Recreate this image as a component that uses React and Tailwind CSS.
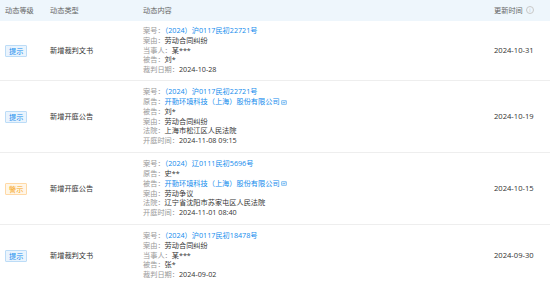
import React from "react";

const ROWS = [
  {
    level: "提示",
    type: "新增裁判文书",
    height: "h-[60px]",
    date: "2024-10-31",
    lines: [
      { label: "案号：", value: "（2024）沪0117民初22721号", link: true },
      { label: "案由：", value: "劳动合同纠纷" },
      { label: "当事人：", value: "某***" },
      { label: "被告：", value: "刘*" },
      { label: "裁判日期：", value: "2024-10-28" },
    ],
  },
  {
    level: "提示",
    type: "新增开庭公告",
    height: "h-[72px]",
    date: "2024-10-19",
    lines: [
      { label: "案号：", value: "（2024）沪0117民初22721号", link: true },
      { label: "原告：", value: "开勤环境科技（上海）股份有限公司", link: true, icon: true },
      { label: "被告：", value: "刘*" },
      { label: "案由：", value: "劳动合同纠纷" },
      { label: "法院：", value: "上海市松江区人民法院" },
      { label: "开庭时间：", value: "2024-11-08 09:15" },
    ],
  },
  {
    level: "警示",
    type: "新增开庭公告",
    height: "h-[72px]",
    date: "2024-10-15",
    lines: [
      { label: "案号：", value: "（2024）辽0111民初5696号", link: true },
      { label: "原告：", value: "史**" },
      { label: "被告：", value: "开勤环境科技（上海）股份有限公司", link: true, icon: true },
      { label: "案由：", value: "劳动争议" },
      { label: "法院：", value: "辽宁省沈阳市苏家屯区人民法院" },
      { label: "开庭时间：", value: "2024-11-01 08:40" },
    ],
  },
  {
    level: "提示",
    type: "新增裁判文书",
    height: "h-[62px]",
    date: "2024-09-30",
    lines: [
      { label: "案号：", value: "（2024）沪0117民初18478号", link: true },
      { label: "案由：", value: "劳动合同纠纷" },
      { label: "当事人：", value: "某***" },
      { label: "被告：", value: "张*" },
      { label: "裁判日期：", value: "2024-09-02" },
    ],
  },
];

function Badge({ level }) {
  const warn = level === "警示";
  return (
    <span
      className={
        warn
          ? "inline-block border border-[#ffd9a6] bg-[#fff6e8] text-[#f5a623] px-[3px] leading-[10px] rounded-[1px]"
          : "inline-block border border-[#bcdcf7] bg-[#eaf4fd] text-[#128bed] px-[3px] leading-[10px] rounded-[1px]"
      }
    >
      {level}
    </span>
  );
}

function LinkIcon() {
  return (
    <svg width="6" height="5" viewBox="0 0 6 5" className="inline-block ml-[1px] align-middle">
      <rect x="0.5" y="0.5" width="5" height="4" rx="0.6" fill="#d8ebfb" stroke="#5aa9ee" strokeWidth="0.6" />
      <path d="M1.5 3.2 L2.6 2 L3.4 2.8 L4.5 1.6" fill="none" stroke="#128bed" strokeWidth="0.5" />
    </svg>
  );
}

export default function App() {
  return (
    <div
      className="w-[550px] h-[286px] overflow-hidden bg-white text-[7.2px] text-[#333]"
      style={{ fontFamily: '"Open Sans", "Noto Sans CJK SC", sans-serif' }}
    >
      {/* header */}
      <div className="flex items-center h-[21px] bg-[#eef6fc] text-[#666]">
        <div className="w-[50px] pl-[5px]">动态等级</div>
        <div className="w-[93px]">动态类型</div>
        <div className="w-[351px]">动态内容</div>
        <div className="flex items-center gap-[3px]">
          <span>更新时间</span>
          <span className="inline-flex items-center justify-center w-[8px] h-[8px] rounded-full border border-[#c8c8c8] text-[5px] leading-none text-[#c0c0c0]">
            i
          </span>
        </div>
      </div>

      {ROWS.map((row, i) => (
        <div key={i} className={`flex items-center border-b border-[#eeeeee] ${row.height}`}>
          <div className="w-[50px] pl-[5px]">
            <Badge level={row.level} />
          </div>
          <div className="w-[93px] text-[#333]">{row.type}</div>
          <div className="w-[351px] flex flex-col leading-[9.7px]">
            {row.lines.map((l, j) => (
              <div key={j} className="whitespace-nowrap">
                <span className="text-[#999]">{l.label}</span>
                <span className={l.link ? "text-[#128bed]" : "text-[#333]"}>{l.value}</span>
                {l.icon && <LinkIcon />}
              </div>
            ))}
          </div>
          <div className="text-[7.6px] text-[#333]">{row.date}</div>
        </div>
      ))}
    </div>
  );
}
